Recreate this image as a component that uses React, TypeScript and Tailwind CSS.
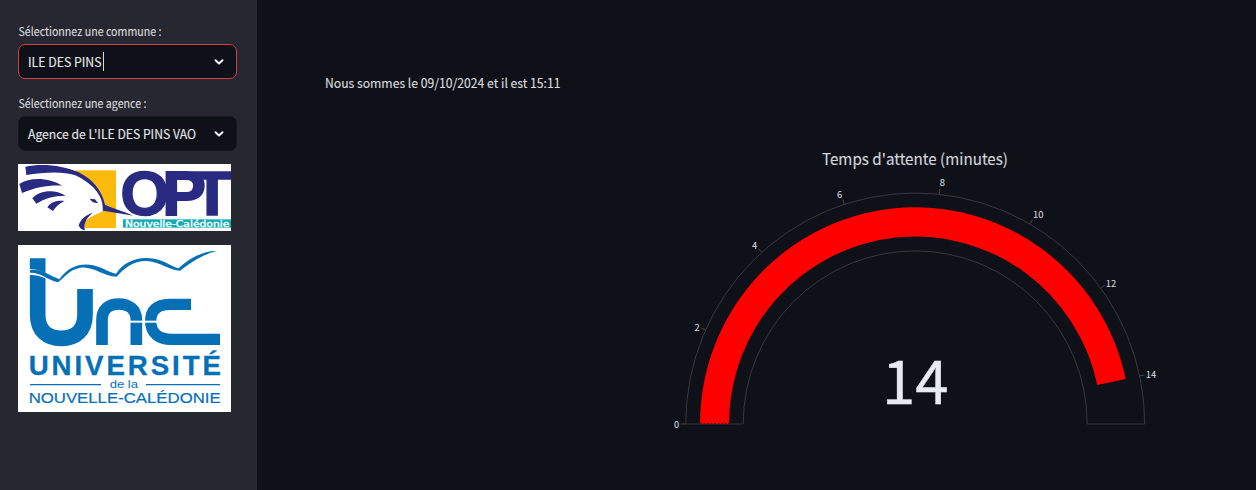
import React from "react";

const CX = 915.2;
const CY = 424;
const RATIO = 1.007;

function point(radius: number, degrees: number) {
  const a = (degrees * Math.PI) / 180;
  return { x: CX - radius * Math.cos(a), y: CY - radius * RATIO * Math.sin(a) };
}

function band(outer: number, inner: number, end: number) {
  const a = point(outer, 0);
  const b = point(outer, end);
  const c = point(inner, end);
  const d = point(inner, 0);
  return `M${a.x} ${a.y}A${outer} ${outer * RATIO} 0 0 1 ${b.x} ${b.y}L${c.x} ${c.y}A${inner} ${inner * RATIO} 0 0 0 ${d.x} ${d.y}Z`;
}

const ticks = [
  { value: 0, x: 676.5, y: 427.5 },
  { value: 2, x: 697, y: 330.5 },
  { value: 4, x: 754.5, y: 248.5 },
  { value: 6, x: 839.5, y: 197.5 },
  { value: 8, x: 942.3, y: 186.3 },
  { value: 10, x: 1038.3, y: 218 },
  { value: 12, x: 1111, y: 286.5 },
  { value: 14, x: 1151, y: 378.2 },
];

function Gauge() {
  return (
    <svg
      className="block h-[350px] w-[520px] font-['Noto_Sans_CJK_SC',sans-serif]"
      viewBox="660 140 520 350"
    >
      <text x="822" y="164.5" fontSize="15.4" fill="#d3d5dc" stroke="#d3d5dc" strokeWidth="0.15" textLength="186" lengthAdjust="spacingAndGlyphs">
        Temps d'attente (minutes)
      </text>
      <path d={band(229.5, 172, 180)} fill="none" stroke="#383838" strokeWidth="1" />
      <path d={band(215.2, 186.2, 168)} fill="#ff0000" />
      <path d="M700 423.5h29" stroke="#5a1719" strokeWidth="1" strokeDasharray="2 1.5" />
      {ticks.map((t) => {
        const a = point(229.5, t.value * 12);
        const b = point(234.5, t.value * 12);
        return (
          <g key={t.value}>
            <line x1={a.x} y1={a.y} x2={b.x} y2={b.y} stroke="#444" />
            <text x={t.x} y={t.y} textAnchor="middle" fontSize="9.4" fill="#d4d5da" stroke="#d4d5da" strokeWidth="0.1">
              {t.value}
            </text>
          </g>
        );
      })}
      <text x="882" y="404.3" fontSize="61" fill="#e6eaf1" stroke="#e6eaf1" strokeWidth="0.4" textLength="66.5" lengthAdjust="spacingAndGlyphs">
        14
      </text>
    </svg>
  );
}

function OptLogo() {
  return (
    <svg className="block h-[67px] w-[213px] bg-white" viewBox="24 18 639 201">
      <rect x="196" y="37" width="122" height="173" fill="#fbba0c" />
      <path
        d="M24 80C80 30 150 25 202 45C250 68 276 105 281 144L286 156C264 167 239 176 225 190L224 219H24Z"
        fill="#fff"
      />
      <g fill="#292b83">
        <path d="M46 26C95 15 160 22 206 43C246 62 276 98 285 140C310 152 340 158 369 173C335 166 305 162 278 158C282 112 247 77 196 52C155 38 100 43 49 51Z" />
        <path d="M28 78C60 56 118 58 157 83C115 81 78 88 36 105Z" />
        <path d="M67 121C88 98 132 92 167 113C130 113 104 121 79 137Z" />
        <path d="M112 148C121 132 141 125 164 129C147 137 138 146 129 159Z" />
        <path d="M239 122L255 124L264 135C253 136 244 131 239 122Z" />
        <path d="M248 165C226 171 212 184 206 202C208 210 216 216 225 217C220 198 228 180 248 165Z" />
      </g>
      <g className="font-['Liberation_Sans',sans-serif] font-bold" fill="#292b83" stroke="#292b83" strokeWidth="4">
        <text x="331" y="172" fontSize="187" textLength="147" lengthAdjust="spacingAndGlyphs">O</text>
        <text x="457" y="170" fontSize="188" strokeWidth="6" textLength="131" lengthAdjust="spacingAndGlyphs">P</text>
        <text x="543" y="170" fontSize="188" textLength="127" lengthAdjust="spacingAndGlyphs">T</text>
      </g>
      <rect x="339" y="184" width="324" height="25" fill="#13acb3" />
      <text
        className="font-['DejaVu_Sans',sans-serif]"
        x="345"
        y="206"
        fontSize="25"
        fill="#fff"
        stroke="#fff"
        strokeWidth="1"
        textLength="313"
        lengthAdjust="spacingAndGlyphs"
      >
        Nouvelle-Calédonie
      </text>
    </svg>
  );
}

function UncLogo() {
  return (
    <svg className="block h-[167px] w-[213px] bg-white" viewBox="24 21 639 501">
      <g fill="none" stroke="#0670b7">
        <path d="M83 61V230C83 278 112 301 154 301S225 278 225 230V153" strokeWidth="47" />
        <path d="M276 321V246C276 213 297 198 326 198S379 213 379 246V321" strokeWidth="35" />
        <path d="M543 199H478C439 199 422 219 422 249C422 285 446 304 484 304H630" strokeWidth="34" />
      </g>
      <path d="M358 251H442" stroke="#fff" strokeWidth="6" />
      <path d="M56 93C83 91 107 108 140 116V140C113 124 88 108 56 111Z" fill="#fff" />
      <path
        d="M60 96C90 92 113 109 148 124C174 86 213 74 249 82C279 88 295 103 318 107C344 67 391 53 436 63C469 70 485 86 506 91C533 64 578 38 621 39C582 48 541 73 511 98C477 97 454 73 411 69C370 68 342 91 320 116C277 115 254 85 212 89C177 94 166 117 144 133C111 125 92 103 60 104Z"
        fill="#0670b7"
      />
      <g className="font-['Liberation_Sans',sans-serif]" fill="#0670b7">
        <text className="font-bold" x="56" y="412" fontSize="83" stroke="#0670b7" strokeWidth="1" textLength="577" lengthAdjust="spacing">
          UNIVERSITÉ
        </text>
        <text x="299" y="451" fontSize="33" textLength="85" lengthAdjust="spacingAndGlyphs">de la</text>
        <text x="56" y="495" fontSize="46" stroke="#0670b7" strokeWidth="0.6" textLength="576" lengthAdjust="spacingAndGlyphs">NOUVELLE-CALÉDONIE</text>
      </g>
      <path d="M60 440H273M408 440H630" stroke="#0670b7" strokeWidth="4" />
    </svg>
  );
}

function Field({ label, labelWidth, value, valueWidth, active = false }: {
  label: string;
  labelWidth: number;
  value: string;
  valueWidth: number;
  active?: boolean;
}) {
  return (
    <div className="h-[72px] w-[219px]">
      <svg className="block h-5 w-full" viewBox="0 0 219 20">
        <text x="0.5" y="12" fontSize="11.8" fill="#d9dade" stroke="#d9dade" strokeWidth="0.15" textLength={labelWidth} lengthAdjust="spacingAndGlyphs">
          {label}
        </text>
      </svg>
      <div
        className={
          active
            ? "flex h-[35px] items-center justify-between rounded-[7px] border border-[#cf4040] bg-[#0e1117] pr-[11px] pl-[9px]"
            : "flex h-[35px] items-center justify-between rounded-[7px] border border-[#14171e] bg-[#0e1117] pr-[11px] pl-[9px]"
        }
      >
        <div className="flex items-center">
          <svg className="block h-5 overflow-visible" width={valueWidth + 1} height="20">
            <text x="0" y="15" fontSize="12.8" fill="#e3e4e8" stroke="#e3e4e8" strokeWidth="0.15" textLength={valueWidth} lengthAdjust="spacingAndGlyphs">
              {value}
            </text>
          </svg>
          {active && <span className="h-[19px] w-px bg-[#d8d9dc]" />}
        </div>
        <svg className="h-3 w-3" viewBox="0 0 12 12" fill="none">
          <path d="M2.5 4.2L6 7.5L9.5 4.2" stroke="#f5f5f7" strokeWidth="2" strokeLinecap="round" strokeLinejoin="round" />
        </svg>
      </div>
    </div>
  );
}

export default function App() {
  return (
    <div className="flex h-[490px] w-[1256px] overflow-hidden bg-[#0e1117] font-['Noto_Sans_CJK_SC',sans-serif]">
      <aside className="flex w-[257px] shrink-0 flex-col bg-[#262730] pt-6 pl-[18px]">
        <Field label="Sélectionnez une commune :" labelWidth={143} value="ILE DES PINS" valueWidth={73.5} active />
        <Field label="Sélectionnez une agence :" labelWidth={128} value="Agence de L'ILE DES PINS VAO" valueWidth={168} />
        <div className="-mt-1 flex flex-col gap-3.5">
          <OptLogo />
          <UncLogo />
        </div>
      </aside>
      <main className="flex flex-1 flex-col">
        <div className="h-[140px] pt-[73px] pl-[68px]">
          <svg className="block h-5 w-[240px]" viewBox="0 0 240 20">
            <text x="0" y="14.7" fontSize="12.8" fill="#d9dade" stroke="#d9dade" strokeWidth="0.15" textLength="235.5" lengthAdjust="spacingAndGlyphs">
              Nous sommes le 09/10/2024 et il est 15:11
            </text>
          </svg>
        </div>
        <div className="pl-[403px]">
          <Gauge />
        </div>
      </main>
    </div>
  );
}
